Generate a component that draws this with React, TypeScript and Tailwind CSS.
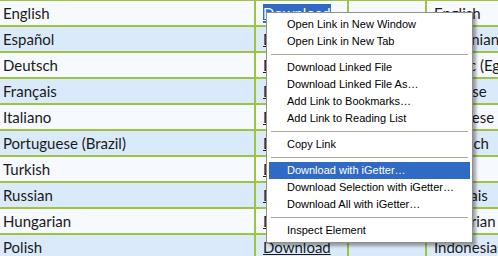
import React from "react";

const rows: [string, string][] = [
  ["English", "English"],
  ["Español", "Romanian"],
  ["Deutsch", "Arabic (Egypt)"],
  ["Français", "Chinese"],
  ["Italiano", "Japanese"],
  ["Portuguese (Brazil)", "Deutsch"],
  ["Turkish", "Greek"],
  ["Russian", "Français"],
  ["Hungarian", "Bulgarian"],
  ["Polish", "Indonesian"],
];

type Item = { label: string; sep?: boolean; active?: boolean };
const menu: Item[] = [
  { label: "Open Link in New Window" },
  { label: "Open Link in New Tab" },
  { label: "", sep: true },
  { label: "Download Linked File" },
  { label: "Download Linked File As…" },
  { label: "Add Link to Bookmarks…" },
  { label: "Add Link to Reading List" },
  { label: "", sep: true },
  { label: "Copy Link" },
  { label: "", sep: true },
  { label: "Download with iGetter…", active: true },
  { label: "Download Selection with iGetter…" },
  { label: "Download All with iGetter…" },
  { label: "", sep: true },
  { label: "Inspect Element" },
];

export default function App() {
  return (
    <div className="relative w-[498px] h-[256px] overflow-hidden bg-white">
      <div
        className="flex flex-col border-t border-[#9dc53f] text-[15px] text-[#1a1a1a]"
        style={{ fontFamily: "Lato, 'Open Sans', sans-serif" }}
      >
        {rows.map(([a, b], i) => {
          const bg = i % 2 === 0 ? "bg-[#f6f9fd]" : "bg-[#dbeafa]";
          return (
            <div key={i} className={`flex h-[26px] border-b-2 border-[#9dc53f] ${bg}`}>
              <div className="w-[254px] shrink-0 pl-[3px] flex items-center leading-none">{a}</div>
              <div className="w-[93px] shrink-0 border-l-2 border-[#9dc53f] pl-[7px] flex items-center leading-none">
                {i === 0 ? (
                  <span className="underline bg-[#316ac5] text-white py-[2px]">Download</span>
                ) : (
                  <span className="underline">Download</span>
                )}
              </div>
              <div className="w-[80px] shrink-0 border-l-2 border-r-2 border-[#9dc53f]" />
              <div className="flex-1 pl-[7px] flex items-center leading-none whitespace-nowrap">{b}</div>
            </div>
          );
        })}
      </div>

      <div
        className="absolute left-[266px] top-[12px] w-[207px] bg-white border border-[#8f8f8f] py-[3px] px-[2px] shadow-[3px_3px_3px_rgba(0,0,0,0.35)] text-[11px] text-black"
        style={{ fontFamily: "'Liberation Sans', Arial, sans-serif" }}
      >
        {menu.map((m, i) =>
          m.sep ? (
            <div key={i} className="h-[9px] flex items-center px-[2px]">
              <div className="h-px w-full bg-[#aca899]" />
            </div>
          ) : (
            <div
              key={i}
              className={`h-[17px] pl-[18px] flex items-center whitespace-nowrap ${
                m.active ? "bg-[#316ac5] text-white" : ""
              }`}
            >
              {m.label}
            </div>
          )
        )}
      </div>
    </div>
  );
}
